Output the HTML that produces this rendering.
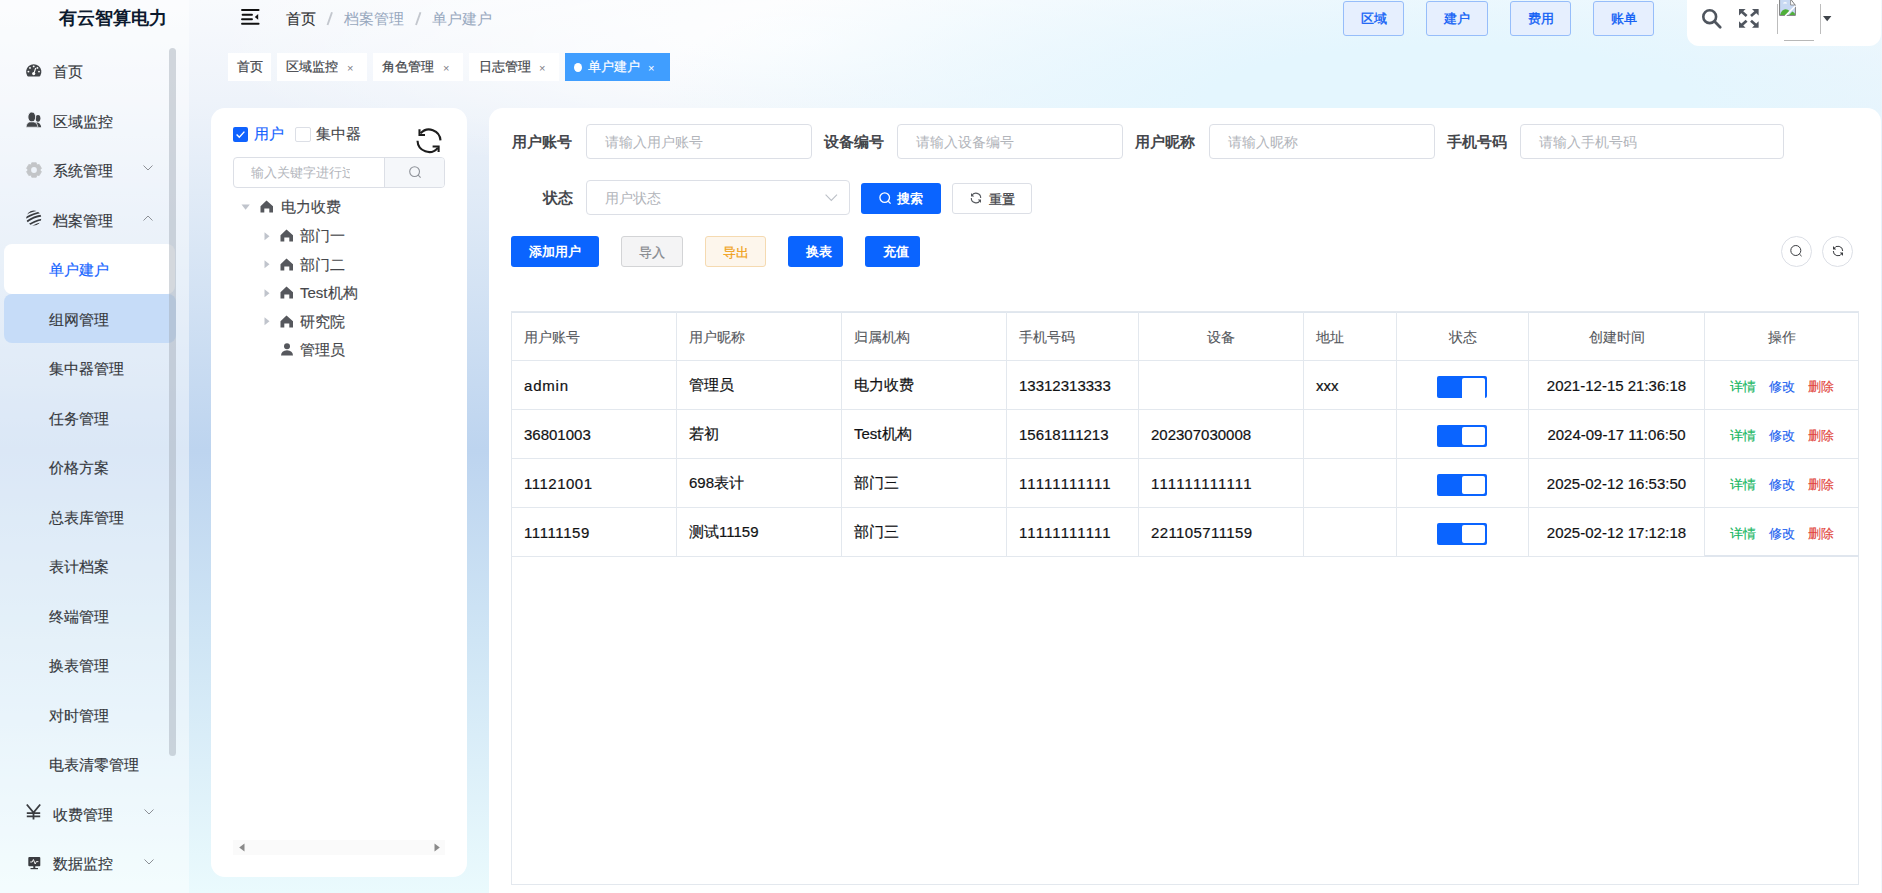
<!DOCTYPE html>
<html><head><meta charset="utf-8">
<style>
*{box-sizing:border-box;margin:0;padding:0}
html,body{width:1882px;height:893px;overflow:hidden}
body{font-family:"Liberation Sans",sans-serif;position:relative;color:#303133;
background:
radial-gradient(ellipse 800px 180px at 1450px 100px,rgba(228,246,254,1) 30%,rgba(228,246,254,0) 100%),
radial-gradient(ellipse 600px 140px at 800px 40px,rgba(255,255,255,0.9),rgba(255,255,255,0) 100%),
linear-gradient(180deg,#f8fafd 0px,#eef3fa 100px,#d9e6f5 250px,#bdd4ef 450px,#cfe5f5 640px,#eafafd 893px);}
.a{position:absolute}
svg{position:absolute;overflow:visible}
#side{left:0;top:0;width:189px;height:893px;background:rgba(255,255,255,0.45)}
.logo{left:59px;top:6px;font-size:18px;font-weight:bold;color:#0c1a2e;white-space:nowrap;line-height:24px}
.mi{left:53px;font-size:15px;color:#36393e;line-height:20px;white-space:nowrap;-webkit-text-stroke:0.15px currentColor}
.si{left:49px;font-size:15px;color:#36393e;line-height:20px;white-space:nowrap;-webkit-text-stroke:0.15px currentColor}
#sbar{left:169px;top:48px;width:7px;height:708px;border-radius:4px;background:rgba(160,168,180,0.45)}
.tbtn{top:1px;height:35px;width:61px;border:1px solid #96bdfa;background:#e6effe;color:#0f5ef5;font-size:13px;-webkit-text-stroke:0.35px currentColor;border-radius:3px;text-align:center;line-height:33px}
.tag{top:53px;height:28px;background:#fff;font-size:13px;color:#43464b;line-height:28px;padding-left:9px;white-space:nowrap;-webkit-text-stroke:0.2px currentColor}
.tag .x{position:absolute;font-size:11px;color:#7d8086;top:1px;-webkit-text-stroke:0}
.panel{background:#fff}
.lbl{font-size:15px;font-weight:bold;color:#45474c;line-height:20px;white-space:nowrap}
.inp{height:35px;border:1px solid #dcdfe6;border-radius:4px;background:#fff;font-size:14px;color:#b1b4ba;line-height:35px;padding-left:18px;white-space:nowrap}
.btn{height:31px;border-radius:3px;font-size:13px;line-height:31px;text-align:center;white-space:nowrap}
.bb{background:#0a64ff;color:#fff;font-weight:bold}
table{border-collapse:collapse;position:absolute;left:511px;top:311px;table-layout:fixed}
td,th{border:1px solid #e3e8ee;height:49px;font-size:15px;color:#111214;-webkit-text-stroke:0.2px currentColor;padding-left:12px;text-align:left;font-weight:normal;white-space:nowrap}
th{font-size:14px;color:#55585d;padding-top:4px;-webkit-text-stroke:0.1px currentColor}
.tc{text-align:center;padding-left:0}
.sw{display:inline-block;width:50px;height:22px;background:#0a64ff;border-radius:2px;position:relative;vertical-align:middle;top:2px;left:-1px}
.sw i{position:absolute;right:2px;top:2px;width:23px;height:18px;background:#fff;border-radius:2px}
.op{font-size:13px;padding-left:25px;padding-top:3px}
.op span{display:inline-block;margin-right:12.8px;-webkit-text-stroke:0.15px currentColor}
.tn{font-size:15px;color:#46474b;line-height:20px;white-space:nowrap;-webkit-text-stroke:0.15px currentColor}
</style></head><body>

<!-- sidebar -->
<div id="side" class="a"></div>
<div class="a logo">有云智算电力</div>

<div class="a" style="left:4px;top:244px;width:171px;height:50px;background:#fff;border-radius:8px"></div>
<div class="a" style="left:4px;top:294px;width:172px;height:49px;background:#c6dcf8;border-radius:8px"></div>
<div id="sbar" class="a"></div>

<!-- sidebar icons -->
<svg style="left:26px;top:64px" width="16" height="13" viewBox="0 0 16 13">
 <path d="M2.2 12.4 Q1.6 12.4 1.2 11.8 A7.65 7.65 0 1 1 14.3 11.8 Q13.9 12.4 13.3 12.4 Z" fill="#424549"/>
 <circle cx="7.7" cy="2.4" r="0.95" fill="#fff"/><circle cx="4" cy="3.9" r="0.95" fill="#fff"/><circle cx="11.4" cy="3.9" r="0.95" fill="#fff"/>
 <circle cx="2.4" cy="7.6" r="0.95" fill="#fff"/><circle cx="13" cy="7.6" r="0.95" fill="#fff"/>
 <path d="M9.7 4 L8.1 8.8" stroke="#fff" stroke-width="1.1"/><circle cx="7.7" cy="9.6" r="1.6" fill="#fff"/>
</svg>
<svg style="left:26px;top:112px" width="16" height="16" viewBox="0 0 16 16">
 <ellipse cx="12" cy="6.3" rx="2.4" ry="3.4" fill="#424549"/>
 <path d="M10.5 10.2 Q14.6 10.8 15.2 15.2 H11 Z" fill="#424549"/>
 <ellipse cx="5.8" cy="5" rx="3.9" ry="5" fill="#424549" stroke="#f3f6fb" stroke-width="0.9"/>
 <path d="M0 15.2 Q0.3 10.6 3.6 9.9 L8 9.9 Q11.6 10.6 12 15.2 Z" fill="#424549" stroke="#f3f6fb" stroke-width="0.7"/>
</svg>
<svg style="left:26px;top:162px" width="16" height="16" viewBox="0 0 16 16">
 <path d="M5.78 0.73 L10.22 0.73 L10.95 2.89 L13.18 2.44 L15.41 6.29 L13.90 8.00 L15.41 9.71 L13.18 13.56 L10.95 13.11 L10.22 15.27 L5.78 15.27 L5.05 13.11 L2.82 13.56 L0.59 9.71 L2.10 8.00 L0.59 6.29 L2.82 2.44 L5.05 2.89 Z" fill="#c3c5c8" stroke="#c3c5c8" stroke-width="0.8" stroke-linejoin="round"/>
 <circle cx="8" cy="8" r="6" fill="#c3c5c8"/>
 <circle cx="8" cy="8" r="2.9" fill="#eef3fa"/>
</svg>
<svg style="left:26px;top:210px" width="16" height="16" viewBox="0 0 16 16">
 <defs><clipPath id="cb"><circle cx="7.8" cy="8" r="7.6"/></clipPath></defs>
 <g clip-path="url(#cb)" stroke="#3a3c40" stroke-width="1.9" fill="none">
  <path d="M-2 5 Q6 0 16 -1"/><path d="M-2 9 Q7 3 17 2"/><path d="M-1 13 Q8 6 17 5.5"/><path d="M0 17 Q9 10 17 9.5"/><path d="M3 19 Q11 13 18 13"/>
 </g>
</svg>
<svg style="left:26px;top:804px" width="16" height="16" viewBox="0 0 16 16">
 <path d="M0.8 0.5 L7.5 8.5 L14.2 0.5 M7.5 8.5 L7.5 15.6 M0.8 9.2 H14.2 M0.8 12.4 H14.2" stroke="#3a3c40" stroke-width="1.8" fill="none"/>
</svg>
<svg style="left:28px;top:857px" width="13" height="13" viewBox="0 0 13 13">
 <rect x="0.3" y="0" width="12" height="9.2" rx="1" fill="#3a3c40"/>
 <path d="M2.2 5 L4.2 5 L5.4 2.5 L7.2 7 L8.3 4.6 L10.4 4.6" stroke="#fff" stroke-width="0.9" fill="none"/>
 <rect x="5.3" y="9" width="2" height="2" fill="#3a3c40"/><rect x="2.5" y="11" width="7.5" height="1.2" fill="#3a3c40"/>
</svg>
<!-- chevrons -->
<svg style="left:143px;top:165px" width="10" height="6" viewBox="0 0 10 6"><path d="M0.5 0.5 L5 5 L9.5 0.5" stroke="#8d9096" stroke-width="1" fill="none"/></svg>
<svg style="left:143px;top:215px" width="10" height="6" viewBox="0 0 10 6"><path d="M0.5 5.5 L5 1 L9.5 5.5" stroke="#8d9096" stroke-width="1" fill="none"/></svg>
<svg style="left:144px;top:809px" width="10" height="6" viewBox="0 0 10 6"><path d="M0.5 0.5 L5 5 L9.5 0.5" stroke="#8d9096" stroke-width="1" fill="none"/></svg>
<svg style="left:144px;top:859px" width="10" height="6" viewBox="0 0 10 6"><path d="M0.5 0.5 L5 5 L9.5 0.5" stroke="#8d9096" stroke-width="1" fill="none"/></svg>

<div class="a mi" style="top:62px">首页</div>
<div class="a mi" style="top:112px">区域监控</div>
<div class="a mi" style="top:161px">系统管理</div>
<div class="a mi" style="top:211px">档案管理</div>
<div class="a si" style="top:260px;color:#1463ff">单户建户</div>
<div class="a si" style="top:310px">组网管理</div>
<div class="a si" style="top:359px">集中器管理</div>
<div class="a si" style="top:409px">任务管理</div>
<div class="a si" style="top:458px">价格方案</div>
<div class="a si" style="top:508px">总表库管理</div>
<div class="a si" style="top:557px">表计档案</div>
<div class="a si" style="top:607px">终端管理</div>
<div class="a si" style="top:656px">换表管理</div>
<div class="a si" style="top:706px">对时管理</div>
<div class="a si" style="top:755px">电表清零管理</div>
<div class="a mi" style="top:805px">收费管理</div>
<div class="a mi" style="top:854px">数据监控</div>

<!-- header -->
<svg style="left:241px;top:8px" width="19" height="18" viewBox="0 0 19 18">
 <g stroke="#111" stroke-width="1.9" stroke-linecap="round"><path d="M1 2 H17.6"/><path d="M1.6 6.7 H11"/><path d="M1 11.2 H11"/><path d="M1 15.8 H17.6"/></g>
 <path d="M17.2 6.1 L13.8 8.9 L17.2 11.8 Z" fill="#111"/>
</svg>
<div class="a" style="left:286px;top:9px;font-size:15px;color:#303133;line-height:20px;white-space:nowrap;-webkit-text-stroke:0.15px #303133">首页</div>
<svg style="left:325px;top:11px" width="10" height="16" viewBox="0 0 10 16"><path d="M7 1.3 L2.5 14" stroke="#c3c7ce" stroke-width="1.9"/></svg>
<div class="a" style="left:344px;top:9px;font-size:15px;color:#97a8be;line-height:20px;white-space:nowrap">档案管理</div>
<svg style="left:413px;top:11px" width="10" height="16" viewBox="0 0 10 16"><path d="M7.5 1.3 L3 14" stroke="#c3c7ce" stroke-width="1.9"/></svg>
<div class="a" style="left:432px;top:9px;font-size:15px;color:#97a8be;line-height:20px;white-space:nowrap">单户建户</div>

<div class="a tbtn" style="left:1343px">区域</div>
<div class="a tbtn" style="left:1426px;width:62px">建户</div>
<div class="a tbtn" style="left:1510px">费用</div>
<div class="a tbtn" style="left:1593px">账单</div>

<div class="a" style="left:1687px;top:-12px;width:194px;height:58px;background:#fff;border-radius:12px"></div>
<svg style="left:1701px;top:8px" width="22" height="21" viewBox="0 0 22 21">
 <circle cx="8.7" cy="8.7" r="6.4" stroke="#4f555e" stroke-width="2.6" fill="none"/>
 <path d="M13.6 13.6 L19.2 19.2" stroke="#4f555e" stroke-width="2.8" stroke-linecap="round"/>
</svg>
<svg style="left:1739px;top:9px" width="20" height="19" viewBox="0 0 20 19">
 <g fill="#4f555e"><path d="M0 0 H6.6 L0 6.6 Z"/><path d="M19.6 0 H13 L19.6 6.6 Z"/><path d="M0 18.8 H6.6 L0 12.2 Z"/><path d="M19.6 18.8 H13 L19.6 12.2 Z"/></g>
 <g stroke="#4f555e" stroke-width="2.7"><path d="M2.5 2.5 L7.6 7.1"/><path d="M17.1 2.5 L12 7.1"/><path d="M2.5 16.3 L7.6 11.7"/><path d="M17.1 16.3 L12 11.7"/></g>
</svg>
<div class="a" style="left:1777px;top:4px;width:1px;height:30px;background:#bdbdbd"></div>
<div class="a" style="left:1820px;top:4px;width:1px;height:30px;background:#bdbdbd"></div>
<div class="a" style="left:1784px;top:40px;width:30px;height:1px;background:#b8b8b8"></div>
<svg style="left:1779px;top:0px" width="18" height="16" viewBox="0 0 18 16">
 <path d="M0.6 -1 V15.4 H16.4 V5.4 L11.6 -1 Z" fill="#c8d9f3"/>
 <path d="M11.6 -1 V5 H16.4" fill="#fff" stroke="#8a8a8a" stroke-width="0.9"/>
 <path d="M0.6 -1 V15.4 H16.4 V5.4 L11.6 -1" fill="none" stroke="#7d7d7d" stroke-width="1"/>
 <path d="M4 3.6 Q4.6 1.8 6.2 2.3 Q7.8 1.9 8 3.6 Z" fill="#fff"/>
 <path d="M1.1 14.9 Q2.5 9.5 6.5 9.2 Q9 9.2 10.5 11 L7 14.9 Z" fill="#4faf3a"/>
 <path d="M10 14.9 L13.3 11.6 Q15 12.4 15.9 13.5 V14.9 Z" fill="#4faf3a"/>
 <path d="M6.2 16 L16.6 5.8" stroke="#fff" stroke-width="1.6"/>
</svg>
<svg style="left:1823px;top:16px" width="9" height="6" viewBox="0 0 9 6"><path d="M0 0 H8.4 L4.2 5.2 Z" fill="#3f444b"/></svg>

<!-- tags -->
<div class="a tag" style="left:228px;width:43px">首页</div>
<div class="a tag" style="left:277px;width:90px">区域监控<span class="x" style="left:70px">×</span></div>
<div class="a tag" style="left:373px;width:90px">角色管理<span class="x" style="left:70px">×</span></div>
<div class="a tag" style="left:469px;width:90px;padding-left:10px">日志管理<span class="x" style="left:70px">×</span></div>
<div class="a tag" style="left:565px;width:105px;background:#409eff;color:#fff;padding-left:23px">单户建户<span class="x" style="left:83px;color:#fff">×</span><span class="a" style="left:9px;top:10px;width:8px;height:9px;border-radius:50%;background:#fff"></span></div>

<!-- left panel -->
<div class="a panel" style="left:211px;top:108px;width:256px;height:769px;border-radius:14px"></div>
<div class="a" style="left:233px;top:127px;width:15px;height:15px;background:#0f62fe;border-radius:2px"></div>
<svg style="left:233px;top:127px" width="15" height="15" viewBox="0 0 15 15"><path d="M3.6 7.6 L6.3 10.2 L11.4 4.6" stroke="#fff" stroke-width="1.4" fill="none"/></svg>
<div class="a tn" style="left:254px;top:124px;color:#1463ff">用户</div>
<div class="a" style="left:295px;top:127px;width:16px;height:15px;border:1px solid #dcdfe6;border-radius:2px;background:#fff"></div>
<div class="a tn" style="left:316px;top:124px">集中器</div>
<svg style="left:416px;top:127px" width="26" height="26" viewBox="0 0 26 26">
 <g stroke="#1d1d1d" stroke-width="2.1" fill="none">
 <path d="M4.6 6.2 A11.5 11.7 0 0 1 24.5 13.4"/>
 <path d="M1.5 13.8 A11.5 11.7 0 0 0 21.8 20.8"/>
 <path d="M3.5 2.3 V8 H9"/>
 <path d="M16.6 19.5 H22.6 V25"/>
 </g>
</svg>
<div class="a" style="left:233px;top:157px;width:212px;height:31px;border:1px solid #dcdfe6;border-radius:4px;background:#fff;overflow:hidden">
 <div class="a" style="left:150px;top:0;width:61px;height:29px;background:#f5f7fa;border-left:1px solid #dcdfe6"></div>
 <div class="a" style="left:17px;top:6px;width:99px;overflow:hidden;font-size:13px;color:#b3b6bc;line-height:18px;white-space:nowrap">输入关键字进行过滤</div>
</div>
<svg style="left:409px;top:166px" width="13" height="13" viewBox="0 0 13 13"><circle cx="5.6" cy="5.6" r="4.9" stroke="#8e9299" stroke-width="1.1" fill="none"/><path d="M9.2 9.2 L11.6 11.6" stroke="#8e9299" stroke-width="1.1"/></svg>

<!-- tree -->
<svg style="left:241px;top:204px" width="10" height="7" viewBox="0 0 10 7"><path d="M0.5 0.5 H8.8 L4.6 5.8 Z" fill="#c0c4cc"/></svg>
<svg style="left:260px;top:200px" width="14" height="13" viewBox="0 0 14 13"><path d="M6.5 0.5 L13 6.3 V12.6 H9.3 V8.5 H4.3 V12.6 H0.5 V6.3 Z" fill="#56585d"/></svg>
<div class="a tn" style="left:281px;top:197px">电力收费</div>

<svg style="left:264px;top:232px" width="6" height="9" viewBox="0 0 6 9"><path d="M0.5 0.3 L5.5 4.3 L0.5 8.3 Z" fill="#c0c4cc"/></svg>
<svg style="left:280px;top:229px" width="14" height="13" viewBox="0 0 14 13"><path d="M6.5 0.5 L13 6.3 V12.6 H9.3 V8.5 H4.3 V12.6 H0.5 V6.3 Z" fill="#56585d"/></svg>
<div class="a tn" style="left:300px;top:226px">部门一</div>

<svg style="left:264px;top:260px" width="6" height="9" viewBox="0 0 6 9"><path d="M0.5 0.3 L5.5 4.3 L0.5 8.3 Z" fill="#c0c4cc"/></svg>
<svg style="left:280px;top:258px" width="14" height="13" viewBox="0 0 14 13"><path d="M6.5 0.5 L13 6.3 V12.6 H9.3 V8.5 H4.3 V12.6 H0.5 V6.3 Z" fill="#56585d"/></svg>
<div class="a tn" style="left:300px;top:255px">部门二</div>

<svg style="left:264px;top:289px" width="6" height="9" viewBox="0 0 6 9"><path d="M0.5 0.3 L5.5 4.3 L0.5 8.3 Z" fill="#c0c4cc"/></svg>
<svg style="left:280px;top:286px" width="14" height="13" viewBox="0 0 14 13"><path d="M6.5 0.5 L13 6.3 V12.6 H9.3 V8.5 H4.3 V12.6 H0.5 V6.3 Z" fill="#56585d"/></svg>
<div class="a tn" style="left:300px;top:283px">Test机构</div>

<svg style="left:264px;top:317px" width="6" height="9" viewBox="0 0 6 9"><path d="M0.5 0.3 L5.5 4.3 L0.5 8.3 Z" fill="#c0c4cc"/></svg>
<svg style="left:280px;top:315px" width="14" height="13" viewBox="0 0 14 13"><path d="M6.5 0.5 L13 6.3 V12.6 H9.3 V8.5 H4.3 V12.6 H0.5 V6.3 Z" fill="#56585d"/></svg>
<div class="a tn" style="left:300px;top:312px">研究院</div>

<svg style="left:281px;top:343px" width="12" height="13" viewBox="0 0 12 13"><circle cx="6" cy="3.2" r="3" fill="#56585d"/><path d="M0 12.6 Q0.3 7.4 6 7.2 Q11.7 7.4 12 12.6 Z" fill="#56585d"/></svg>
<div class="a tn" style="left:300px;top:340px">管理员</div>

<!-- tree h-scrollbar -->
<div class="a" style="left:233px;top:840px;width:212px;height:15px;background:#fafafa"></div>
<svg style="left:238px;top:843px" width="8" height="9" viewBox="0 0 8 9"><path d="M6.5 0.5 L1.2 4.5 L6.5 8.5 Z" fill="#8a8a8a"/></svg>
<svg style="left:433px;top:843px" width="8" height="9" viewBox="0 0 8 9"><path d="M1.5 0.5 L6.8 4.5 L1.5 8.5 Z" fill="#8a8a8a"/></svg>

<!-- main panel -->
<div class="a" style="left:1870px;top:112px;width:12px;height:781px;background:linear-gradient(180deg,#e8f5fd,#dff0fc 500px,#f0f9fe)"></div>
<div class="a panel" style="left:489px;top:108px;width:1392px;height:800px;border-radius:14px 14px 0 0"></div>

<div class="a lbl" style="left:512px;top:132px">用户账号</div>
<div class="a inp" style="left:586px;top:124px;width:226px">请输入用户账号</div>
<div class="a lbl" style="left:824px;top:132px">设备编号</div>
<div class="a inp" style="left:897px;top:124px;width:226px">请输入设备编号</div>
<div class="a lbl" style="left:1135px;top:132px">用户昵称</div>
<div class="a inp" style="left:1209px;top:124px;width:226px">请输入昵称</div>
<div class="a lbl" style="left:1447px;top:132px">手机号码</div>
<div class="a inp" style="left:1520px;top:124px;width:264px">请输入手机号码</div>

<div class="a lbl" style="left:543px;top:188px">状态</div>
<div class="a inp" style="left:586px;top:180px;width:264px">用户状态</div>
<svg style="left:825px;top:194px" width="13" height="8" viewBox="0 0 13 8"><path d="M0.6 0.6 L6.3 6.4 L12 0.6" stroke="#bcc0c7" stroke-width="1.1" fill="none"/></svg>

<div class="a btn bb" style="left:861px;top:183px;width:80px;padding-left:18px">搜索</div>
<svg style="left:879px;top:192px" width="13" height="13" viewBox="0 0 13 13"><circle cx="5.7" cy="5.6" r="4.8" stroke="#fff" stroke-width="1.3" fill="none"/><path d="M9.3 9.2 L11.6 11.6" stroke="#fff" stroke-width="1.3"/></svg>
<div class="a btn" style="left:952px;top:183px;width:80px;border:1px solid #dcdfe6;color:#3f4146;-webkit-text-stroke:0.3px currentColor;padding-left:19px">重置</div>
<svg style="left:970px;top:192px" width="12" height="12" viewBox="0 0 12 12">
 <path d="M1.3 6 A4.7 4.7 0 0 0 10.2 8.2" stroke="#55585d" stroke-width="1.1" fill="none"/><path d="M10.7 6 A4.7 4.7 0 0 0 1.8 3.8" stroke="#55585d" stroke-width="1.1" fill="none"/>
 <path d="M1 1 V4.6 H4.2 Z" fill="#55585d"/><path d="M11 11 V7.4 H7.8 Z" fill="#55585d"/>
</svg>

<div class="a btn bb" style="left:511px;top:236px;width:88px">添加用户</div>
<div class="a btn" style="left:621px;top:236px;width:62px;background:#f4f4f5;border:1px solid #d3d4d6;color:#86898e;-webkit-text-stroke:0.25px currentColor">导入</div>
<div class="a btn" style="left:705px;top:236px;width:61px;background:#fdf6ec;border:1px solid #f5dab1;color:#f0a21a;-webkit-text-stroke:0.25px currentColor">导出</div>
<div class="a btn bb" style="left:788px;top:236px;width:55px;padding-left:7px">换表</div>
<div class="a btn bb" style="left:865px;top:236px;width:55px;padding-left:7px">充值</div>

<div class="a" style="left:1781px;top:236px;width:31px;height:31px;border:1px solid #dcdfe6;border-radius:50%"></div>
<svg style="left:1790px;top:245px" width="13" height="12" viewBox="0 0 13 12"><circle cx="5.8" cy="5.5" r="5" stroke="#3a3c40" stroke-width="1" fill="none"/><path d="M9.4 9 L11.6 11.2" stroke="#3a3c40" stroke-width="1"/></svg>
<div class="a" style="left:1822px;top:236px;width:31px;height:31px;border:1px solid #dcdfe6;border-radius:50%"></div>
<svg style="left:1832px;top:245px" width="12" height="12" viewBox="0 0 12 12">
 <path d="M1.3 6 A4.7 4.7 0 0 0 10.2 8.2" stroke="#3a3c40" stroke-width="1" fill="none"/><path d="M10.7 6 A4.7 4.7 0 0 0 1.8 3.8" stroke="#3a3c40" stroke-width="1" fill="none"/>
 <path d="M1 1 V4.6 H4.2 Z" fill="#3a3c40"/><path d="M11 11 V7.4 H7.8 Z" fill="#3a3c40"/>
</svg>

<div class="a" style="left:511px;top:311px;width:1347px;height:2px;background:#dfe6ee"></div>
<table>
<colgroup><col style="width:165px"><col style="width:165px"><col style="width:165px"><col style="width:132px"><col style="width:165px"><col style="width:93px"><col style="width:132px"><col style="width:176px"><col style="width:154px"></colgroup>
<tr><th>用户账号</th><th>用户昵称</th><th>归属机构</th><th>手机号码</th><th class="tc">设备</th><th>地址</th><th class="tc">状态</th><th class="tc">创建时间</th><th class="tc">操作</th></tr>
<tr><td style="letter-spacing:0.8px">admin</td><td>管理员</td><td>电力收费</td><td>13312313333</td><td></td><td>xxx</td><td class="tc"><span class="sw"><i style="height:20px;border-radius:2px 2px 0 0"></i></span></td><td class="tc">2021-12-15 21:36:18</td><td class="op"><span style="color:#15b65f">详情</span><span style="color:#1d63f0">修改</span><span style="color:#e2463e">删除</span></td></tr>
<tr><td>36801003</td><td>若初</td><td>Test机构</td><td>15618111213</td><td>202307030008</td><td></td><td class="tc"><span class="sw"><i></i></span></td><td class="tc">2024-09-17 11:06:50</td><td class="op"><span style="color:#15b65f">详情</span><span style="color:#1d63f0">修改</span><span style="color:#e2463e">删除</span></td></tr>
<tr><td style="letter-spacing:0.5px">11121001</td><td>698表计</td><td>部门三</td><td style="letter-spacing:1.1px">11111111111</td><td style="letter-spacing:1.15px">111111111111</td><td></td><td class="tc"><span class="sw"><i></i></span></td><td class="tc">2025-02-12 16:53:50</td><td class="op"><span style="color:#15b65f">详情</span><span style="color:#1d63f0">修改</span><span style="color:#e2463e">删除</span></td></tr>
<tr><td style="letter-spacing:0.6px">11111159</td><td>测试11159</td><td>部门三</td><td style="letter-spacing:1.1px">11111111111</td><td style="letter-spacing:0.4px">221105711159</td><td></td><td class="tc"><span class="sw"><i></i></span></td><td class="tc">2025-02-12 17:12:18</td><td class="op"><span style="color:#15b65f">详情</span><span style="color:#1d63f0">修改</span><span style="color:#e2463e">删除</span></td></tr>
</table>
<div class="a" style="left:511px;top:556px;width:1348px;height:329px;border:1px solid #e3e8ee;border-top:none"></div>
<div class="a" style="left:1705px;top:555px;width:154px;height:2px;background:#e0e6ee"></div>

</body></html>
